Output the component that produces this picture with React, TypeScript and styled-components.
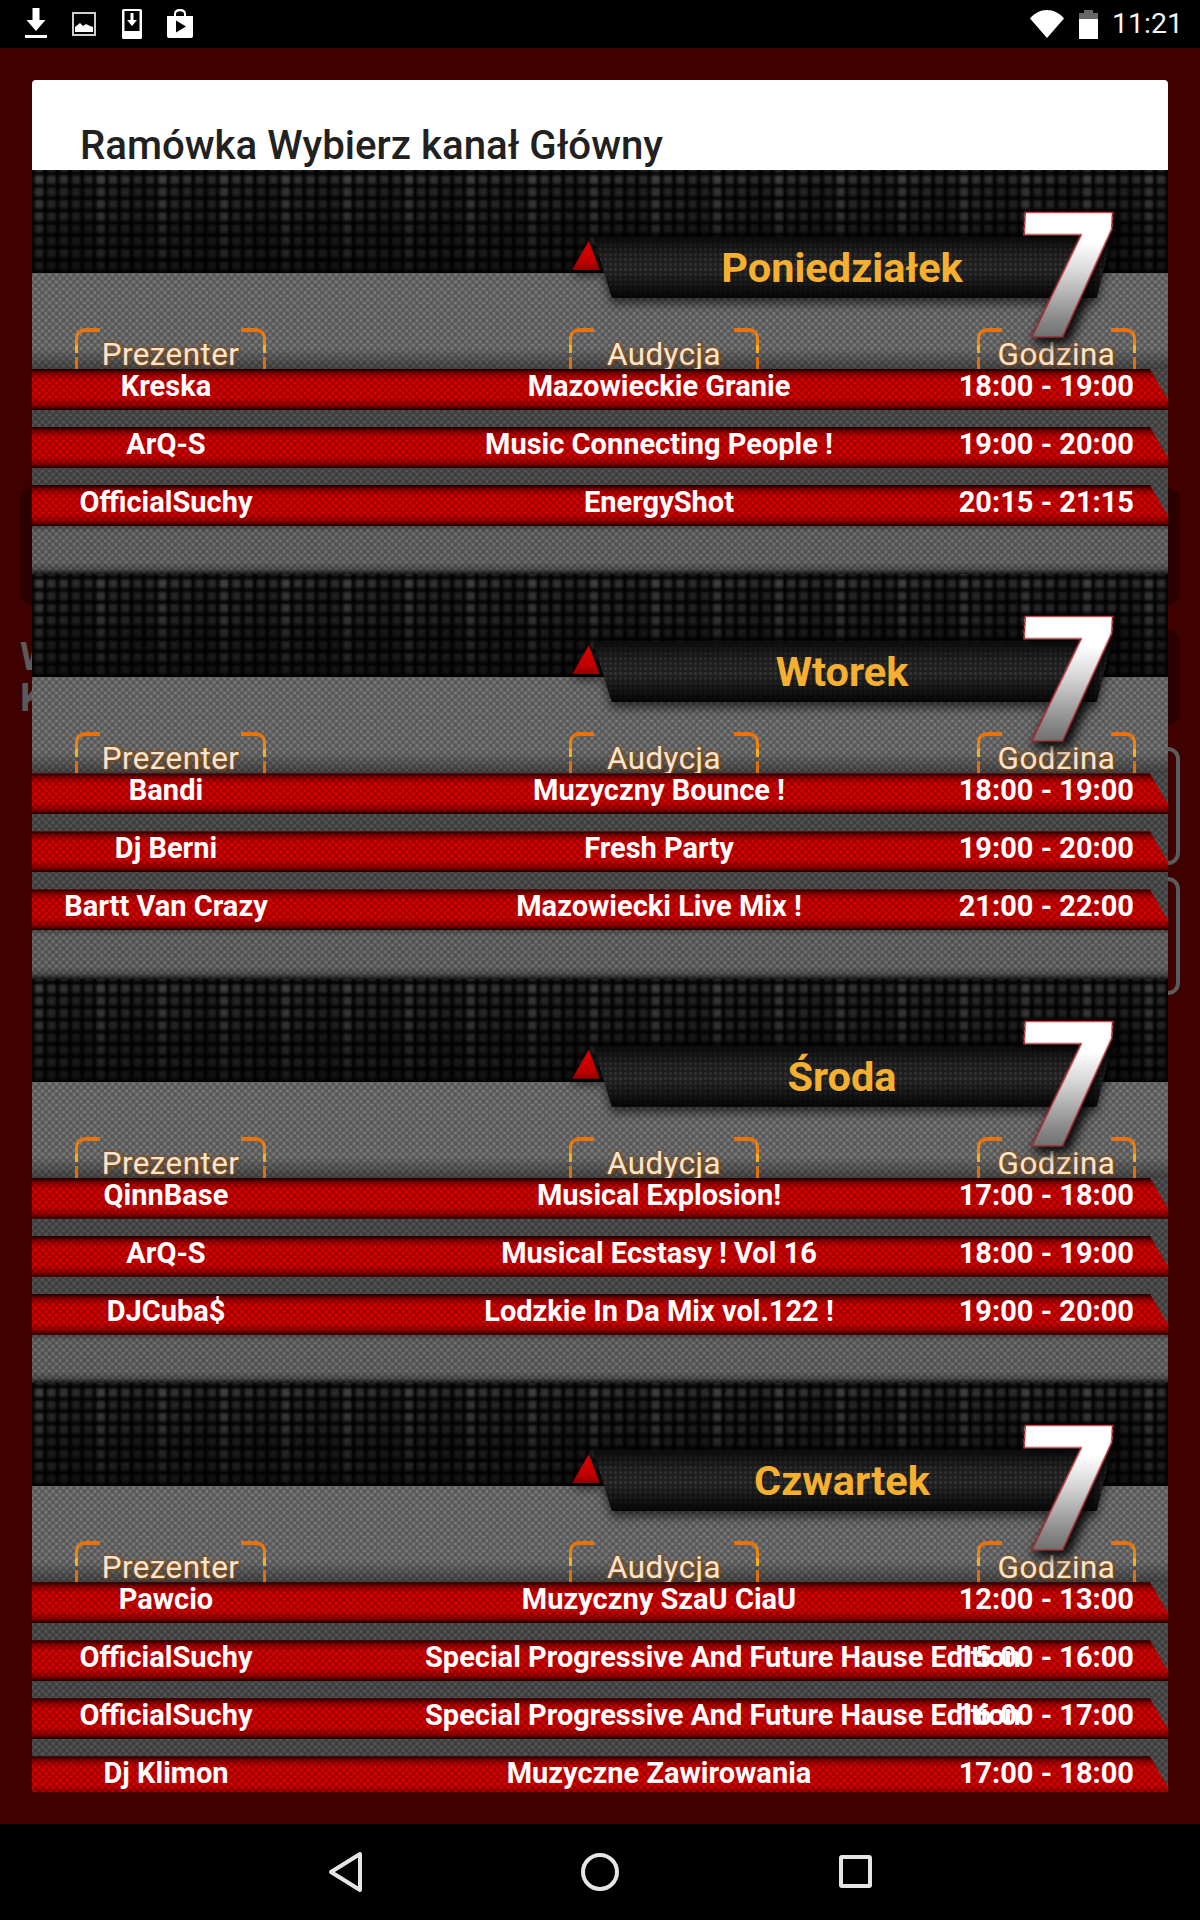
import styled, { createGlobalStyle } from "styled-components";

const GlobalStyle = createGlobalStyle`
  html, body {
    margin: 0;
    padding: 0;
    background: #000;
    font-family: Roboto, "Liberation Sans", sans-serif;
  }
`;

const Screen = styled.div`
  width: 1200px;
  height: 1920px;
  display: flex;
  flex-direction: column;
  overflow: hidden;
  background: #3f0000;
`;

const StatusBar = styled.div`
  height: 48px;
  flex-shrink: 0;
  display: flex;
  align-items: center;
  justify-content: space-between;
  padding: 0 17px 0 12px;
  background: #000;
  color: #f2f2f2;
`;

const StatusGroup = styled.div`
  display: flex;
  align-items: center;
`;

const NotifyCell = styled.div`
  width: 48px;
  height: 48px;
  display: flex;
  align-items: center;
  justify-content: center;
`;

const SystemIcons = styled.div`
  display: flex;
  align-items: center;
  gap: 15px;
`;

const Clock = styled.span`
  font-size: 28.5px;
  line-height: 48px;
  margin-left: -1px;
`;

const Stage = styled.div`
  flex: 1;
  position: relative;
  padding: 32px;
`;

const Dim = styled.div<{ $side: "left" | "right"; $top: number; $height: number }>`
  position: absolute;
  ${(p) => p.$side}: 20px;
  top: ${(p) => p.$top}px;
  width: 40px;
  height: ${(p) => p.$height}px;
  background: #2b0000;
  border-radius: 12px;
`;

const GhostBracket = styled.div<{ $top: number }>`
  position: absolute;
  right: 20px;
  top: ${(p) => p.$top}px;
  width: 40px;
  height: 118px;
  box-sizing: border-box;
  border: 4px solid #5c5c5c;
  border-radius: 12px;
`;

const GhostLetter = styled.span<{ $top: number }>`
  position: absolute;
  left: 20px;
  top: ${(p) => p.$top}px;
  font-size: 38px;
  font-weight: 700;
  line-height: 38px;
  color: #5a5a5a;
`;

const Dialog = styled.div`
  position: relative;
  height: 1712px;
  overflow: hidden;
  border-radius: 4px;
  background: #fff;
`;

const DialogHead = styled.div`
  height: 90px;
  box-sizing: border-box;
  padding: 42px 0 0 48px;
  overflow: hidden;
`;

const DialogTitle = styled.h1`
  margin: 0;
  font-size: 40.2px;
  font-weight: 500;
  line-height: 47px;
  color: #212121;
`;

const Section = styled.section`
  position: relative;
  min-height: 404.4px;
  flex-shrink: 0;
  display: flex;
  flex-direction: column;
  background-color: #8c8c8c;
  background-image:
    radial-gradient(circle, #585858 34%, transparent 66%),
    radial-gradient(circle, #585858 34%, transparent 66%);
  background-size: 7px 7px;
  background-position: 0 0, 3.5px 3.5px;
`;

const DarkBand = styled.div`
  height: 103px;
  flex-shrink: 0;
  background-color: #262626;
  background-image:
    linear-gradient(rgba(0, 0, 0, 0.12) 0, rgba(0, 0, 0, 0) 30%, rgba(0, 0, 0, 0.15) 55%, rgba(0, 0, 0, 0.7) 100%),
    repeating-linear-gradient(90deg, rgba(0, 0, 0, 0.8) 0 1.5px, rgba(0, 0, 0, 0.3) 3.5px, transparent 5.5px, transparent 9px, rgba(0, 0, 0, 0.3) 10.8px, rgba(0, 0, 0, 0.8) 12.33px),
    repeating-linear-gradient(0deg, rgba(0, 0, 0, 0.8) 0 1.5px, rgba(0, 0, 0, 0.3) 3.5px, transparent 5.5px, transparent 9px, rgba(0, 0, 0, 0.3) 10.8px, rgba(0, 0, 0, 0.8) 12.33px),
    repeating-linear-gradient(90deg, rgba(255, 255, 255, 0.07) 0 12.33px, transparent 12.33px 37px, rgba(0, 0, 0, 0.14) 37px 61.65px),
    repeating-linear-gradient(0deg, rgba(255, 255, 255, 0.07) 0 24.66px, transparent 24.66px 37px, rgba(0, 0, 0, 0.16) 37px 49.32px, transparent 49.32px 86.31px);
`;

const Ribbon = styled.div`
  position: absolute;
  left: 0;
  top: 0;
  width: 100%;
  height: 190px;
  pointer-events: none;
  filter: drop-shadow(0 6px 5px rgba(0, 0, 0, 0.55));
`;

const Marker = styled.div`
  position: absolute;
  left: 540px;
  top: 71px;
  width: 28px;
  height: 29px;
  clip-path: polygon(60% 0, 100% 100%, 0 100%);
  background: linear-gradient(#e00000, #c00000 70%, #900000);
`;

const Banner = styled.div`
  position: absolute;
  left: 561px;
  top: 67px;
  width: 519px;
  height: 61px;
  box-sizing: border-box;
  padding: 1px 21px 0 0;
  text-align: center;
  clip-path: polygon(0 0, 100% 0, 97% 100%, 19px 100%);
  font-size: 41.5px;
  font-weight: 700;
  line-height: 60px;
  color: #f5b032;
  background-color: #1d1d1d;
  background-image:
    linear-gradient(#0b0b0b 0, rgba(20, 20, 20, 0.2) 30%, rgba(45, 45, 45, 0.15) 55%, #050505 100%),
    radial-gradient(circle, #333 30%, transparent 60%);
  background-size: auto, 5px 5px;
`;

const Seven = styled.span`
  position: absolute;
  left: 977px;
  top: 20px;
  padding: 0 8px;
  font-size: 175px;
  font-weight: 900;
  font-style: italic;
  line-height: 175px;
  color: transparent;
  background: linear-gradient(#fff 30%, #d4d4d4 48%, #8e8e8e 72%, #5c5c5c 92%);
  -webkit-background-clip: text;
  background-clip: text;
  -webkit-text-stroke: 1.2px #b5161a;
  transform: skewX(6.5deg);
  filter: drop-shadow(5px 3px 4px rgba(0, 0, 0, 0.75));
`;

const Heads = styled.div`
  display: grid;
  grid-template-columns: 494px 408px 159px;
  padding: 55px 0 0 43px;
  background: linear-gradient(transparent 78%, rgba(0, 0, 0, 0.38));
`;

const Bracket = styled.div<{ $width: number }>`
  position: relative;
  width: ${(p) => p.$width}px;
  height: 41px;
  padding-top: 9px;
  box-sizing: border-box;
  overflow: hidden;
  text-align: center;
  font-size: 31.5px;
  line-height: 35px;
  letter-spacing: 0.4px;
  color: #efe6da;
  text-shadow: 0 0 1px #9a5616, 0 0 2px #8f4f14, 0 0 3px #8f4f14, 0 0 3px #8f4f14, 1px 1px 2px #7a4010;
  background:
    linear-gradient(#f7b11e, #f7b11e) 0 17px / 3px 8px no-repeat,
    linear-gradient(#f7b11e, #f7b11e) 100% 17px / 3px 8px no-repeat,
    linear-gradient(#df6f0c, #df6f0c) 0 100% / 3px 12px no-repeat,
    linear-gradient(#df6f0c, #df6f0c) 100% 100% / 3px 12px no-repeat;

  &::before,
  &::after {
    content: "";
    position: absolute;
    top: 0;
    width: 25px;
    height: 17px;
    box-sizing: border-box;
    border-top: 4px solid #e8720c;
  }
  &::before {
    left: 0;
    border-left: 3px solid #ee8410;
    border-top-left-radius: 10px;
  }
  &::after {
    right: 0;
    border-right: 3px solid #ee8410;
    border-top-right-radius: 10px;
  }
`;

const Rows = styled.div`
  position: relative;
  display: flex;
  flex-direction: column;
  gap: 17px;
  background: rgba(0, 0, 0, 0.3);
`;

const Row = styled.div`
  height: 41px;
  display: grid;
  grid-template-columns: 268px 593px 275px;
  clip-path: polygon(0 0, 1118px 0, 100% 31px, 100% 100%, 0 100%);
  font-size: 29px;
  font-weight: 700;
  line-height: 35px;
  color: #fff;
  white-space: nowrap;
  background-color: #e80000;
  background-image:
    linear-gradient(rgba(15, 0, 0, 0.95) 0, rgba(40, 0, 0, 0.4) 11%, transparent 26%, transparent 72%, rgba(40, 0, 0, 0.4) 90%, rgba(15, 0, 0, 0.95) 100%),
    radial-gradient(circle, rgba(110, 0, 0, 0.6) 28%, transparent 62%),
    radial-gradient(circle, rgba(110, 0, 0, 0.6) 28%, transparent 62%);
  background-size: auto, 7px 7px, 7px 7px;
  background-position: 0 0, 0 0, 3.5px 3.5px;
`;

const Presenter = styled.div`
  text-align: center;
`;

const Show = styled.div`
  text-align: center;
  padding-left: 125px;
  width: 468px;
`;

const Time = styled.div`
  position: relative;
  text-align: right;
  padding-right: 34px;
`;

const SectionEnd = styled.div`
  flex: 1;
  background: linear-gradient(rgba(0, 0, 0, 0.32) 0, rgba(0, 0, 0, 0.08) 10%, rgba(0, 0, 0, 0.08) 76%, rgba(0, 0, 0, 0.28) 90%, rgba(0, 0, 0, 0.75) 100%);
`;

const NavBar = styled.div`
  height: 96px;
  flex-shrink: 0;
  display: flex;
  align-items: center;
  justify-content: center;
  gap: 215px;
  background: #000;
`;

const DownloadIcon = () => (
  <svg width="28" height="36" viewBox="0 0 28 36" fill="#fff">
    <path d="M10.5 2h7v12h6L14 25 4.5 14h6z" />
    <rect x="3" y="29" width="22" height="3" />
  </svg>
);

const PictureIcon = () => (
  <svg width="28" height="28" viewBox="0 0 28 28">
    <rect x="3" y="3" width="22" height="22" fill="none" stroke="#cfcfcf" strokeWidth="2" />
    <path d="M5 22v-5l5-4 3 3 3-2 4 2 3 1v5z" fill="#fff" />
  </svg>
);

const PhoneIcon = () => (
  <svg width="28" height="36" viewBox="0 0 28 36">
    <rect x="4" y="3" width="20" height="30" rx="1.5" fill="#fff" />
    <rect x="6.5" y="5" width="15" height="20" fill="#000" />
    <path d="M12.5 7h3v7H19l-5 6-5-6h3.5z" fill="#fff" />
  </svg>
);

const StoreIcon = () => (
  <svg width="30" height="32" viewBox="0 0 30 32">
    <path d="M2 8h7V6c0-3 2-5 6-5s6 2 6 5v2h7v20a2 2 0 0 1-2 2H4a2 2 0 0 1-2-2z" fill="#fff" />
    <path d="M11 8V6c0-1.6 1.4-2.8 4-2.8s4 1.2 4 2.8v2z" fill="#000" />
    <path d="M11 12.5v12l10-6z" fill="#000" />
  </svg>
);

const WifiIcon = () => (
  <svg width="34" height="28" viewBox="0 0 34 28">
    <path d="M0 8.5C4.5 3 10.5 0 17 0s12.500 3 17 8.5L17 28z" fill="#fff" />
  </svg>
);

const BatteryIcon = () => (
  <svg width="19" height="29" viewBox="0 0 19 29">
    <path d="M0 3h5V0h9v3h5v26H0z" fill="#666" />
    <rect y="9" width="19" height="20" fill="#fff" />
  </svg>
);

const BackIcon = () => (
  <svg width="40" height="44" viewBox="0 0 40 44" fill="none" stroke="#e6e6e6" strokeWidth="4" strokeLinejoin="round">
    <path d="M35 4v36L6 22z" />
  </svg>
);

const HomeIcon = () => (
  <svg width="40" height="44" viewBox="0 0 40 44" fill="none" stroke="#e6e6e6" strokeWidth="4">
    <circle cx="20" cy="22" r="17" />
  </svg>
);

const RecentIcon = () => (
  <svg width="40" height="44" viewBox="0 0 40 44" fill="none" stroke="#e6e6e6" strokeWidth="4" strokeLinejoin="round">
    <rect x="6" y="7" width="29" height="29" rx="1" />
  </svg>
);

type Slot = [string, string, string];

const days: { name: string; slots: Slot[] }[] = [
  {
    name: "Poniedziałek",
    slots: [
      ["Kreska", "Mazowieckie Granie", "18:00 - 19:00"],
      ["ArQ-S", "Music Connecting People !", "19:00 - 20:00"],
      ["OfficialSuchy", "EnergyShot", "20:15 - 21:15"],
    ],
  },
  {
    name: "Wtorek",
    slots: [
      ["Bandi", "Muzyczny Bounce !", "18:00 - 19:00"],
      ["Dj Berni", "Fresh Party", "19:00 - 20:00"],
      ["Bartt Van Crazy", "Mazowiecki Live Mix !", "21:00 - 22:00"],
    ],
  },
  {
    name: "Środa",
    slots: [
      ["QinnBase", "Musical Explosion!", "17:00 - 18:00"],
      ["ArQ-S", "Musical Ecstasy ! Vol 16", "18:00 - 19:00"],
      ["DJCuba$", "Lodzkie In Da Mix vol.122 !", "19:00 - 20:00"],
    ],
  },
  {
    name: "Czwartek",
    slots: [
      ["Pawcio", "Muzyczny SzaU CiaU", "12:00 - 13:00"],
      ["OfficialSuchy", "Special Progressive And Future Hause Edition", "15:00 - 16:00"],
      ["OfficialSuchy", "Special Progressive And Future Hause Edition", "16:00 - 17:00"],
      ["Dj Klimon", "Muzyczne Zawirowania", "17:00 - 18:00"],
    ],
  },
];

export default function App() {
  return (
    <Screen>
      <GlobalStyle />
      <StatusBar>
        <StatusGroup>
          <NotifyCell><DownloadIcon /></NotifyCell>
          <NotifyCell><PictureIcon /></NotifyCell>
          <NotifyCell><PhoneIcon /></NotifyCell>
          <NotifyCell><StoreIcon /></NotifyCell>
        </StatusGroup>
        <SystemIcons>
          <WifiIcon />
          <BatteryIcon />
          <Clock>11:21</Clock>
        </SystemIcons>
      </StatusBar>

      <Stage>
        <Dim $side="left" $top={439} $height={118} />
        <Dim $side="right" $top={440} $height={117} />
        <Dim $side="right" $top={582} $height={95} />
        <GhostLetter $top={590}>W</GhostLetter>
        <GhostLetter $top={631}>K</GhostLetter>
        <GhostBracket $top={699} />
        <GhostBracket $top={829} />

        <Dialog>
          <DialogHead>
            <DialogTitle>Ramówka Wybierz kanał Główny</DialogTitle>
          </DialogHead>
          {days.map((day) => (
            <Section key={day.name}>
              <DarkBand />
              <Heads>
                <Bracket $width={191}>Prezenter</Bracket>
                <Bracket $width={190}>Audycja</Bracket>
                <Bracket $width={159}>Godzina</Bracket>
              </Heads>
              <Rows>
                {day.slots.map((slot, i) => (
                  <Row key={i}>
                    <Presenter>{slot[0]}</Presenter>
                    <div>
                      <Show>{slot[1]}</Show>
                    </div>
                    <Time>{slot[2]}</Time>
                  </Row>
                ))}
              </Rows>
              <SectionEnd />
              <Ribbon>
                <Marker />
                <Banner>{day.name}</Banner>
                <Seven>7</Seven>
              </Ribbon>
            </Section>
          ))}
        </Dialog>
      </Stage>

      <NavBar>
        <BackIcon />
        <HomeIcon />
        <RecentIcon />
      </NavBar>
    </Screen>
  );
}
